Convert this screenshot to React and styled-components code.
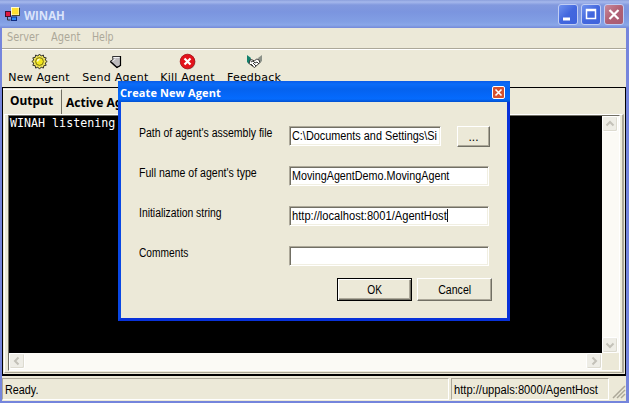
import React from 'react';
import styled, { createGlobalStyle, css } from 'styled-components';

const Global = createGlobalStyle`
  * { box-sizing: border-box; }
  body { margin: 0; overflow: hidden; }
  button { padding: 0; margin: 0; border: 0; }
`;

const Win = styled.div`
  position: relative;
  width: 629px;
  height: 403px;
  display: flex;
  flex-direction: column;
  background: #7585dc;
  font-family: 'Liberation Sans', Arial, sans-serif;
  font-size: 12px;
  color: #000;
`;

/* Condensed lettering: $s is the horizontal scale */
const Cond = styled.span`
  display: inline-block;
  transform: scaleX(${p => p.$s});
  transform-origin: ${p => (p.$center ? 'center' : 'left')};
  white-space: nowrap;
`;

const TitleBar = styled.header`
  height: 28px;
  flex: none;
  display: flex;
  align-items: center;
  padding: 0 5px 0 5px;
  background: linear-gradient(#8b9fdc 0, #a5b8ec 2px, #8299de 5px, #7b95df 12px, #829fe4 22px, #8aa7e8 25px, #7489d8 28px);
`;

const Title = styled.div`
  flex: 1;
  margin-left: 4px;
  padding-top: 1px;
  font: bold 13px/16px 'Open Sans', sans-serif;
  color: #dbe4fb;
`;

const Caption = styled.button`
  width: 20px;
  height: 21px;
  margin: 1px 0 0 3px;
  border: 1px solid #c0cdf4;
  border-radius: 3px;
  background: ${p => (p.$close ? 'linear-gradient(135deg,#c98a9c,#b06074 50%,#a85c74)' : 'linear-gradient(135deg,#6f92ee,#4267de 50%,#3f63dc)')};
  svg { display: block; }
`;

const Client = styled.div`
  flex: 1;
  min-height: 0;
  margin: 0 3px 2px 2px;
  display: flex;
  flex-direction: column;
  background: #ece9d8;
`;

const MenuBar = styled.nav`
  height: 22px;
  flex: none;
  display: flex;
  padding: 2px 0 0 5px;
  border-bottom: 1px solid #fff;
  box-shadow: inset 0 -1px #aca899;
`;

const MenuItem = styled.span`
  width: ${p => p.$w}px;
  font: 11.5px/15px 'DejaVu Sans', sans-serif;
  color: #aca899;
`;

const ToolBar = styled.div`
  height: 37px;
  flex: none;
  display: flex;
  padding: 3px 0 0 0;
`;

const Tool = styled.div`
  width: ${p => p.$w}px;
  display: flex;
  flex-direction: column;
  align-items: center;
  font: 11px/14px 'DejaVu Sans', sans-serif;
  letter-spacing: ${p => p.$ls || 0}px;
  white-space: nowrap;
  svg { display: block; flex: none; margin-bottom: 1px; }
`;

const TabFrame = styled.section`
  height: 289px;
  flex: none;
  display: flex;
  flex-direction: column;
  border: 1px solid #000;
  border-bottom-width: 2px;
`;

const Tabs = styled.div`
  height: 26px;
  flex: none;
  display: flex;
  align-items: flex-end;
`;

const Tab = styled.div`
  height: ${p => (p.$on ? 25 : 22)}px;
  width: ${p => p.$w}px;
  padding: ${p => (p.$on ? '3px 0 0 7px' : '2px 0 0 4px')};
  border-right: 1px solid #716f64;
  border-top: 1px solid ${p => (p.$on ? '#fff' : '#ece9d8')};
  font: bold 12px/15px 'Noto Sans', sans-serif;
  white-space: nowrap;
`;

const Page = styled.div`
  flex: 1;
  min-height: 0;
  margin: 0 1px 1px 1px;
  padding: 0 2px 1px 3px;
  border: solid;
  border-width: 1px 2px 1px 1px;
  border-color: #fff #aca899 #aca899 #fff;
`;

const Console = styled.div`
  height: 100%;
  display: grid;
  grid-template-columns: 1fr 17px;
  grid-template-rows: 1fr 17px;
  border: 1px solid;
  border-color: #716f64 #fff #fff #716f64;
  background: #ece9d8;
`;

const ConsoleText = styled.div`
  background: #000;
  color: #fff;
  padding: 1px 0 0 1px;
  font: 11.67px/13px 'DejaVu Sans Mono', monospace;
  white-space: pre;
  overflow: hidden;
`;

const Scroll = styled.div`
  display: flex;
  flex-direction: ${p => (p.$v ? 'column' : 'row')};
  justify-content: space-between;
  background: #fbfaf5;
`;

const ScrollButton = styled.button`
  width: 16px;
  height: 16px;
  border: 1px solid #fff;
  border-radius: 2px;
  background: #eeede6;
  box-shadow: inset -1px -1px #dddbd0;
  svg { display: block; transform: rotate(${p => p.$r}deg); }
`;

const StatusBar = styled.footer`
  height: 24px;
  flex: none;
  display: flex;
  padding-top: 2px;
`;

const Status = styled.div`
  flex: ${p => (p.$w ? 'none' : 1)};
  width: ${p => p.$w || 0}px;
  margin-right: 2px;
  padding: 4px 0 0 2px;
  border: 1px solid;
  border-color: #aca899 #fff #fff #aca899;
  line-height: 14px;
  white-space: nowrap;
`;

const Dialog = styled.div`
  position: absolute;
  left: 118px;
  top: 81px;
  width: 392px;
  height: 240px;
  border: 3px solid #0831d9;
  border-left-color: #0a48e4;
  border-top: 0;
  background: #ece9d8;
`;

const DialogTitle = styled.div`
  height: 21px;
  margin: 0 -3px;
  padding: 0 5px 0 2px;
  display: flex;
  align-items: center;
  background: linear-gradient(#0a5be8, #0b6cf8 3px, #0562ee 8px, #0468fa 15px, #056bfd 18px, #0250cf);
`;

const DialogName = styled.div`
  flex: 1;
  padding-top: 2px;
  font: bold 11px/14px 'Open Sans', sans-serif;
  letter-spacing: 0.1px;
  color: #fff;
`;

const DialogClose = styled.button`
  width: 13px;
  height: 13px;
  margin-top: 2px;
  border: 1px solid #fff;
  border-radius: 2px;
  background: #d6512f;
  svg { display: block; }
`;

const Form = styled.div`
  padding: 24px 0 0 18px;
`;

const Row = styled.div`
  height: 40px;
  display: flex;
  align-items: flex-start;
`;

const Label = styled.label`
  width: 150px;
  line-height: 14px;
  white-space: nowrap;
`;

const Field = styled.div`
  width: ${p => p.$w}px;
  height: 20px;
  padding: 2px 0 0 2px;
  border: 1px solid;
  border-color: #aca899 #fff #fff #aca899;
  box-shadow: inset 1px 1px #716f64, inset -1px -1px #f1efe2;
  background: #fff;
  line-height: 15px;
  white-space: nowrap;
`;

const Caret = styled.span`
  display: inline-block;
  width: 1px;
  height: 13px;
  vertical-align: -2px;
  background: #000;
`;

const Button = styled.button`
  width: ${p => p.$w}px;
  height: ${p => p.$h || 23}px;
  margin-left: ${p => p.$ml || 0}px;
  background: #ece9d8;
  font: 12px/14px 'Liberation Sans', Arial, sans-serif;
  color: #000;
  border: 1px solid;
  border-color: #fff #716f64 #716f64 #fff;
  box-shadow: inset -1px -1px #aca899;
  ${p => p.$primary && css`
    border-color: #000;
    box-shadow: inset 1px 1px #fff, inset -1px -1px #716f64, inset -2px -2px #aca899;
  `}
`;

const Actions = styled.div`
  display: flex;
  margin: -8px 0 0 198px;
`;

const Chevron = () => (
  <svg width="14" height="14" viewBox="0 0 14 14"><path d="M3.5 8.5 7 5l3.5 3.5" fill="none" stroke="#c3c1b8" strokeWidth="2" /></svg>
);

const AppIcon = () => (
  <svg width="15" height="15" viewBox="0 0 15 15">
    <rect x="0" y="4" width="6" height="6" fill="#401030" />
    <rect x="1" y="5" width="4" height="4" fill="#e01840" />
    <path d="M2.500 10v3h3" fill="none" stroke="#333" />
    <rect x="7" y="1" width="8" height="8" fill="#4a4a30" />
    <rect x="6" y="0" width="8" height="8" fill="#fffbd0" />
    <rect x="7" y="1" width="6.500" height="6.500" fill="#ffe030" />
    <rect x="6" y="9.500" width="6" height="4.500" fill="#102c80" />
    <rect x="7" y="10.500" width="4" height="2.500" fill="#2b8cf8" />
  </svg>
);

const Sun = () => (
  <svg width="17" height="17" viewBox="0 0 17 17">
    <path d="M8.5 1l1.6 2 2.3-1 .4 2.4 2.4.4-1 2.2 2 1.5-2 1.5 1 2.3-2.4.4-.4 2.4-2.3-1-1.6 2-1.6-2-2.3 1-.4-2.4-2.4-.4 1-2.3-2-1.5 2-1.5-1-2.2 2.4-.4.4-2.4 2.3 1z" fill="#f0e45a" stroke="#222" strokeWidth=".9" />
    <circle cx="8.5" cy="8.5" r="3.9" fill="#f2e81c" stroke="#77700c" />
    <path d="M6.500 8.500q0-2 2-2" stroke="#fffde0" strokeWidth="1.300" fill="none" />
  </svg>
);

const Send = () => (
  <svg width="17" height="17" viewBox="0 0 17 17">
    <path d="M5.500 3.500h8v9l-4 2-6.500-6 3-2z" fill="#bdbbbd" stroke="#333" />
    <path d="M13.500 3v9.500l-3.500 2-6.500-6" fill="none" stroke="#000" strokeWidth="1.200" />
    <path d="M6.500 4.500h6M5.500 8l3-2" stroke="#f5f5f5" />
  </svg>
);

const Kill = () => (
  <svg width="17" height="17" viewBox="0 0 17 17">
    <circle cx="9" cy="9" r="7.500" fill="#777" opacity=".5" />
    <circle cx="8.500" cy="8.500" r="7.300" fill="#e3131b" stroke="#a50b12" strokeWidth=".8" />
    <path d="M5.500 5.500l6 6m0-6l-6 6" stroke="#fff" strokeWidth="2.200" />
  </svg>
);

const Shake = () => (
  <svg width="17" height="17" viewBox="0 0 17 17">
    <path d="M1 2l4 3-2 6-2-2z" fill="#13806c" />
    <path d="M16 2l-4 3 2 5 2-2z" fill="#8b9188" />
    <path d="M4.500 6.500l2 .5 2 1 2-2 2 .5 1.500 3-5.500 5-5.500-4z" fill="#fff" stroke="#222" strokeWidth=".9" />
    <path d="M5 9l2-1 2 2 2-1 2 2M5 11l2 2M7 10l3 3" stroke="#222" strokeWidth=".9" fill="none" />
  </svg>
);

export default function App() {
  return (
    <Win>
      <Global />
      <TitleBar>
        <AppIcon />
        <Title><Cond $s={0.88}>WINAH</Cond></Title>
        <Caption><svg width="18" height="19"><path d="M4 14h7" stroke="#fff" strokeWidth="3" /></svg></Caption>
        <Caption><svg width="18" height="19"><path d="M4.500 4.500h9v9h-9zM4 5.500h10" fill="none" stroke="#fff" strokeWidth="1.500" /></svg></Caption>
        <Caption $close><svg width="18" height="19"><path d="M4.500 5l9 9m0-9l-9 9" stroke="#fff" strokeWidth="2.200" /></svg></Caption>
      </TitleBar>
      <Client>
        <MenuBar>
          <MenuItem $w={44}><Cond $s={0.85}>Server</Cond></MenuItem>
          <MenuItem $w={41}><Cond $s={0.86}>Agent</Cond></MenuItem>
          <MenuItem $w={40}><Cond $s={0.82}>Help</Cond></MenuItem>
        </MenuBar>
        <ToolBar>
          <Tool $w={74} $ls={0.15}><Sun />New Agent</Tool>
          <Tool $w={79} $ls={0.25}><Send />Send Agent</Tool>
          <Tool $w={65} $ls={0.2}><Kill />Kill Agent</Tool>
          <Tool $w={68} $ls={0.2}><Shake />Feedback</Tool>
        </ToolBar>
        <TabFrame>
          <Tabs>
            <Tab $on $w={59}>Output</Tab>
            <Tab $w={100}>Active Agents</Tab>
          </Tabs>
          <Page>
            <Console>
              <ConsoleText>WINAH listening</ConsoleText>
              <Scroll $v>
                <ScrollButton $r={0}><Chevron /></ScrollButton>
                <ScrollButton $r={180}><Chevron /></ScrollButton>
              </Scroll>
              <Scroll>
                <ScrollButton $r={-90}><Chevron /></ScrollButton>
                <ScrollButton $r={90}><Chevron /></ScrollButton>
              </Scroll>
            </Console>
          </Page>
        </TabFrame>
        <StatusBar>
          <Status><Cond $s={0.9}>Ready.</Cond></Status>
          <Status $w={158}><Cond $s={0.93}>http://uppals:8000/AgentHost</Cond></Status>
          <svg width="15" height="21"><path d="M2 20L14 8M6 20l8-8M10 20l4-4" stroke="#aca899" strokeWidth="1.500" /></svg>
        </StatusBar>
      </Client>
      <Dialog>
        <DialogTitle>
          <DialogName>Create New Agent</DialogName>
          <DialogClose><svg width="11" height="11"><path d="M2.500 2.500l6 6m0-6l-6 6" stroke="#fff" strokeWidth="1.600" /></svg></DialogClose>
        </DialogTitle>
        <Form>
          <Row>
            <Label><Cond $s={0.875}>Path of agent's assembly file</Cond></Label>
            <Field $w={152}><Cond $s={0.905}>C:\Documents and Settings\Si</Cond></Field>
            <Button $w={33} $h={21} $ml={16}>...</Button>
          </Row>
          <Row>
            <Label><Cond $s={0.88}>Full name of agent's type</Cond></Label>
            <Field $w={200}><Cond $s={0.897}>MovingAgentDemo.MovingAgent</Cond></Field>
          </Row>
          <Row>
            <Label><Cond $s={0.865}>Initialization string</Cond></Label>
            <Field $w={200}><Cond $s={0.928}>http://localhost:8001/AgentHost<Caret /></Cond></Field>
          </Row>
          <Row>
            <Label><Cond $s={0.85}>Comments</Cond></Label>
            <Field $w={200} />
          </Row>
          <Actions>
            <Button $primary $w={75}><Cond $center $s={0.85}>OK</Cond></Button>
            <Button $w={75} $ml={5}><Cond $center $s={0.88}>Cancel</Cond></Button>
          </Actions>
        </Form>
      </Dialog>
    </Win>
  );
}
